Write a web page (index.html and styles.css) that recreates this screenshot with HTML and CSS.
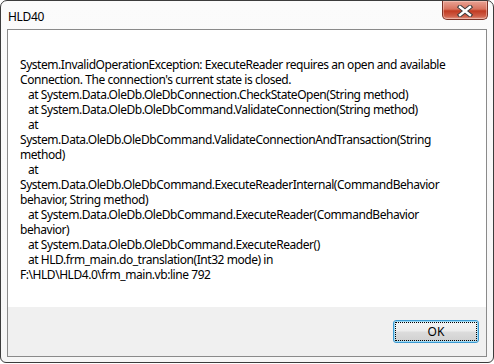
FILE: index.html
```html
<!DOCTYPE html>
<html lang="en">
<head>
  <meta charset="UTF-8" />
  <title>HLD40</title>
  <link rel="stylesheet" href="styles.css">
</head>
<body>
  <div class="window">
    <div class="titlebar">
      <span class="title">HLD40</span>
      <button class="close-btn" aria-label="Close">
        <svg width="18" height="12" viewBox="0 0 18 12">
          <path d="M4 2 L14 10 M14 2 L4 10" stroke="#3b3b3b" stroke-width="4.4" stroke-linecap="square" fill="none"/>
          <path d="M4 2 L14 10 M14 2 L4 10" stroke="#ffffff" stroke-width="2.4" stroke-linecap="square" fill="none"/>
        </svg>
      </button>
    </div>

    <div class="client">
      <div class="message">
<pre class="error-text">System.InvalidOperationException: ExecuteReader requires an open and available
Connection. The connection's current state is closed.
   at System.Data.OleDb.OleDbConnection.CheckStateOpen(String method)
   at System.Data.OleDb.OleDbCommand.ValidateConnection(String method)
   at
System.Data.OleDb.OleDbCommand.ValidateConnectionAndTransaction(String
method)
   at
System.Data.OleDb.OleDbCommand.ExecuteReaderInternal(CommandBehavior
behavior, String method)
   at System.Data.OleDb.OleDbCommand.ExecuteReader(CommandBehavior
behavior)
   at System.Data.OleDb.OleDbCommand.ExecuteReader()
   at HLD.frm_main.do_translation(Int32 mode) in
F:\HLD\HLD4.0\frm_main.vb:line 792</pre>
      </div>
      <div class="buttons">
        <button class="btn-ok">OK</button>
      </div>
    </div>
  </div>
</body>
</html>
```

FILE: styles.css
```css
* { box-sizing: border-box; margin: 0; padding: 0; }
html, body {
  background: #ffffff;
  font-family: 'Noto Sans', sans-serif;
  font-size: 12px;
  color: #000;
}
.window {
  width: 494px;
  height: 363px;
  border: 1px solid #3c3c3c;
  border-radius: 7px 7px 6px 6px;
  background: linear-gradient(180deg, #fbfbfb 0%, #f6f6f6 100%);
  display: flex;
  flex-direction: column;
  padding: 0 6px 5px;
}
.titlebar {
  height: 28px;
  display: flex;
  justify-content: space-between;
  align-items: flex-start;
}
.title {
  padding: 7px 0 0 1px;
  letter-spacing: -0.3px;
}
.close-btn {
  width: 46px;
  height: 19px;
  margin-right: -1px;
  border: 1px solid #7a3226;
  border-top: none;
  border-radius: 0 0 5px 5px;
  background: linear-gradient(180deg, #e9a394 0%, #d8735f 45%, #c13b22 55%, #d0604a 85%, #e19a8a 100%);
  box-shadow: inset 0 0 0 1px rgba(255, 220, 210, 0.45);
  display: flex;
  justify-content: center;
  align-items: center;
  padding-top: 1px;
}
.client {
  flex: 1;
  border: 1px solid #8a8a8a;
  display: flex;
  flex-direction: column;
}
.message {
  background: #ffffff;
  flex: 1;
  padding: 27px 0 0 12px;
}
.error-text {
  font-family: 'Noto Sans', sans-serif;
  font-size: 12px;
  line-height: 15px;
  letter-spacing: -0.45px;
  white-space: pre;
}
.buttons {
  height: 49px;
  background: #f0f0f0;
  display: flex;
  justify-content: flex-end;
  padding: 13px 7px 0 0;
}
.btn-ok {
  width: 86px;
  height: 23px;
  font-family: 'Noto Sans', sans-serif;
  font-size: 12px;
  border: 1px solid #3c9ad2;
  border-radius: 3px;
  background: linear-gradient(180deg, #f4f4f4 0%, #ececec 48%, #dcdcdc 52%, #d0d0d0 100%);
  box-shadow: inset 0 0 0 1px #9fdcf6;
  outline: 1px dotted #000;
  outline-offset: -3px;
}
```
